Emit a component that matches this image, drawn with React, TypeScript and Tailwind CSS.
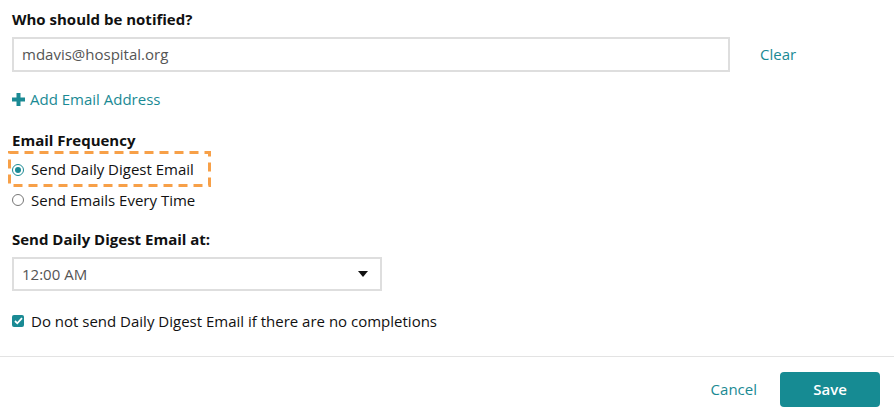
const teal = "text-[#1a8a94]";

const App = () => {
  return (
    <div className="h-[420px] w-[894px] bg-white font-['Open_Sans',sans-serif] text-[#111]">
      <div className="px-3 pt-[9px]">
        <h2 className="text-[15px] font-bold leading-[20px]">Who should be notified?</h2>

        <div className="mt-[8px] flex items-center">
          <div className="flex h-[35px] w-[718px] items-center border-2 border-[#dedede] px-[8px] text-[15px] text-[#555]">
            mdavis@hospital.org
          </div>
          <button className={`ml-[30px] text-[15px] ${teal}`}>Clear</button>
        </div>

        <button className={`mt-[17px] flex items-center gap-[5px] text-[15px] leading-[20px] ${teal}`}>
          <svg width="13" height="13" viewBox="0 0 13 13" className="fill-[#1a8a94]">
            <rect x="4.5" y="0" width="4" height="13" />
            <rect x="0" y="4.5" width="13" height="4" />
          </svg>
          Add Email Address
        </button>

        <h3 className="mt-[21px] text-[15px] font-bold leading-[20px]">Email Frequency</h3>

        <div className="relative mt-[1px]">
          {/* highlight box */}
          <svg
            className="pointer-events-none absolute left-[-4px] top-[0px]"
            width="203"
            height="36"
            viewBox="0 0 203 36"
          >
            <rect
              x="1.5"
              y="1.5"
              width="200"
              height="33"
              fill="none"
              stroke="#f7a048"
              strokeWidth="3"
              strokeDasharray="9 6"
            />
          </svg>
          <label className="flex h-[37px] items-center gap-[7px] text-[15px]">
            <span className="flex h-[12px] w-[12px] items-center justify-center rounded-full border border-[#1a8a94]">
              <span className="h-[6px] w-[6px] rounded-full bg-[#1a8a94]" />
            </span>
            Send Daily Digest Email
          </label>
        </div>
        <label className="mt-[1px] flex h-[22px] items-center gap-[7px] text-[15px]">
          <span className="h-[12px] w-[12px] rounded-full border border-[#777]" />
          Send Emails Every Time
        </label>

        <h3 className="mt-[18px] text-[15px] font-bold leading-[20px]">Send Daily Digest Email at:</h3>

        <div className="mt-[8px] flex h-[34px] w-[370px] items-center justify-between border-2 border-[#dedede] pl-[8px] pr-[12px] text-[15px] text-[#555]">
          12:00 AM
          <svg width="10" height="6" viewBox="0 0 10 6">
            <path d="M0 0h10L5 6z" fill="#111" />
          </svg>
        </div>

        <label className="mt-[20px] flex items-center gap-[7px] text-[15px] leading-[20px]">
          <span className="flex h-[12px] w-[12px] items-center justify-center rounded-[2px] bg-[#1a8a94]">
            <svg width="9" height="8" viewBox="0 0 9 8">
              <path d="M1 4l2.3 2.3L8 1.2" stroke="#fff" strokeWidth="1.8" fill="none" />
            </svg>
          </span>
          Do not send Daily Digest Email if there are no completions
        </label>
      </div>

      <div className="mt-[25px] border-t border-[#e3e3e3]" />

      <div className="flex items-center justify-end gap-[23px] pr-[14px] pt-[15px]">
        <button className={`text-[15px] ${teal}`}>Cancel</button>
        <button className="h-[35px] w-[100px] rounded-[4px] bg-[#168b93] text-[15px] font-semibold text-white">
          Save
        </button>
      </div>
    </div>
  );
};

export default App;
